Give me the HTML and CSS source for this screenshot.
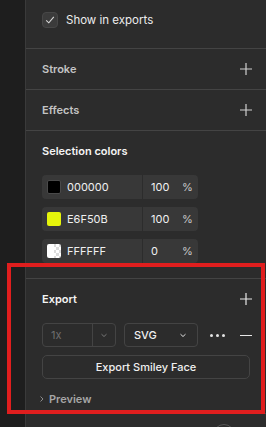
FILE: index.html
```html
<!DOCTYPE html>
<html>
<head>
<meta charset="utf-8">
<link rel="stylesheet" href="styles.css">
</head>
<body>
<div class="rail"></div>
<div class="panel">
  <div class="sec sec-top">
    <div class="check-row">
      <span class="checkbox">
        <svg width="12" height="12" viewBox="0 0 12 12"><path d="M2.2 6.3 L4.8 8.8 L9.8 2.8" fill="none" stroke="#d8d8d8" stroke-width="1.1"/></svg>
      </span>
      <span class="check-label">Show in exports</span>
    </div>
  </div>
  <div class="sec">
    <div class="head"><span class="title dim">Stroke</span><svg class="plus" width="12" height="12" viewBox="0 0 12 12"><path d="M6 0V12M0 6H12" stroke="#d0d0d0" stroke-width="1.2"/></svg></div>
  </div>
  <div class="sec">
    <div class="head"><span class="title dim">Effects</span><svg class="plus" width="12" height="12" viewBox="0 0 12 12"><path d="M6 0V12M0 6H12" stroke="#d0d0d0" stroke-width="1.2"/></svg></div>
  </div>
  <div class="sec sec-colors">
    <div class="head"><span class="title">Selection colors</span></div>
    <div class="crows">
      <div class="crow"><div class="cleft"><span class="sw sw-black"></span><span>000000</span></div><div class="cright"><span class="pct">100</span><span class="pc">%</span></div></div>
      <div class="crow"><div class="cleft"><span class="sw sw-yellow"></span><span>E6F50B</span></div><div class="cright"><span class="pct">100</span><span class="pc">%</span></div></div>
      <div class="crow"><div class="cleft"><span class="sw sw-white"></span><span>FFFFFF</span></div><div class="cright"><span class="pct">0</span><span class="pc">%</span></div></div>
    </div>
  </div>
  <div class="sec sec-export">
    <div class="head"><span class="title">Export</span><svg class="plus" width="12" height="12" viewBox="0 0 12 12"><path d="M6 0V12M0 6H12" stroke="#e8e8e8" stroke-width="1.2"/></svg></div>
    <div class="erow">
      <div class="dd dd-scale"><span class="dd-val">1x</span><span class="dd-arrow"><svg width="8" height="5" viewBox="0 0 8 5"><path d="M1.5 1.2 L4 3.5 L6.5 1.2" fill="none" stroke="#777" stroke-width="1"/></svg></span></div>
      <div class="dd dd-fmt"><span>SVG</span><svg width="8" height="5" viewBox="0 0 8 5"><path d="M1.5 1.2 L4 3.5 L6.5 1.2" fill="none" stroke="#e0e0e0" stroke-width="1"/></svg></div>
      <span class="dots"><i></i><i></i><i></i></span>
      <span class="minus"></span>
    </div>
    <div class="btn">Export Smiley Face</div>
    <div class="preview"><svg width="6" height="8" viewBox="0 0 6 8"><path d="M1.5 1.5 L4 4 L1.5 6.5" fill="none" stroke="#8a8a8a" stroke-width="1"/></svg><span>Preview</span></div>
  </div>
  <div class="sec-bottom"><span class="ring"></span></div>
</div>
<div class="highlight"></div>
</body>
</html>
```
FILE: styles.css
```css
html, body {
  margin: 0;
  padding: 0;
  height: 100%;
  overflow: hidden;
}
body {
  background: #1e1e1e;
  display: flex;
  font-family: Inter, "Noto Sans", sans-serif;
  font-size: 11px;
  color: #e8e8e8;
  position: relative;
}
.rail {
  width: 25px;
  flex: none;
  background: #1e1e1e;
}
.panel {
  flex: 1;
  background: #2c2c2c;
  border-left: 1px solid #3a3a3a;
  display: flex;
  flex-direction: column;
  overflow: hidden;
}
.panel > * {
  flex: none;
}
.sec {
  border-bottom: 1px solid #444444;
}
.sec-top {
  height: 49px;
  box-sizing: border-box;
  padding: 12px 16px 0 16px;
}
.check-row {
  display: flex;
  align-items: center;
  gap: 8px;
}
.checkbox {
  width: 16px;
  height: 16px;
  box-sizing: border-box;
  border-radius: 4px;
  background: #3b3b3b;
  border: 1px solid #474747;
  display: flex;
  align-items: center;
  justify-content: center;
}
.check-label {
  color: #ececec;
  font-size: 11.5px;
}
.head {
  height: 40px;
  display: flex;
  align-items: center;
  justify-content: space-between;
  padding: 0 14px 0 16px;
}
.title {
  font-weight: 600;
  font-size: 11px;
  color: #f4f4f4;
}
.title.dim {
  color: #c4c4c4;
}
.plus {
  display: block;
}
.sec-colors {
  padding-bottom: 15px;
}
.crows {
  display: flex;
  flex-direction: column;
  gap: 8px;
  padding: 4px 16px 0 16px;
}
.crow {
  width: 156px;
  height: 24px;
  background: #383838;
  border-radius: 4px;
  display: flex;
  align-items: center;
}
.cleft {
  width: 101px;
  height: 24px;
  box-sizing: border-box;
  padding-left: 5px;
  display: flex;
  align-items: center;
  gap: 6px;
  border-right: 1px solid #2c2c2c;
  color: #f0f0f0;
}
.cright {
  flex: 1;
  display: flex;
  align-items: center;
  padding-left: 8px;
  color: #f0f0f0;
}
.pct {
  width: 31px;
}
.pc {
  color: #c8c8c8;
}
.sw {
  width: 14px;
  height: 14px;
  box-sizing: border-box;
  border-radius: 2px;
  flex: none;
}
.sw-black {
  background: #000;
  border: 1px solid #4a4a4a;
}
.sw-yellow {
  background: #e6f50b;
}
.sw-white {
  background:
    linear-gradient(90deg, #ffffff 50%, transparent 50%),
    conic-gradient(#ffffff 25%, #dcdcdc 0 50%, #ffffff 0 75%, #dcdcdc 0);
  background-size: 100% 100%, 6px 6px;
}
.sec-export {
  padding-bottom: 2px;
}
.erow {
  display: flex;
  align-items: center;
  padding: 4px 14px 0 16px;
  height: 24px;
}
.dd {
  width: 74px;
  height: 24px;
  box-sizing: border-box;
  border: 1px solid #444444;
  border-radius: 4px;
  display: flex;
  align-items: center;
}
.dd-scale {
  margin-right: 8px;
}
.dd-val {
  width: 50px;
  box-sizing: border-box;
  padding-left: 8px;
  color: #6e6e6e;
  height: 22px;
  line-height: 22px;
  border-right: 1px solid #444444;
}
.dd-arrow {
  flex: 1;
  display: flex;
  justify-content: center;
}
.dd-fmt {
  justify-content: space-between;
  padding: 0 10px 0 9px;
  color: #f0f0f0;
  font-weight: 500;
}
.dots {
  display: flex;
  gap: 3px;
  margin-left: 12px;
}
.dots i {
  width: 3px;
  height: 3px;
  border-radius: 50%;
  background: #e4e4e4;
}
.minus {
  width: 12px;
  height: 1px;
  background: #e8e8e8;
  margin-left: auto;
}
.btn {
  margin: 8px 16px 0 16px;
  width: 208px;
  height: 24px;
  box-sizing: border-box;
  border: 1px solid #444444;
  border-radius: 5px;
  display: flex;
  align-items: center;
  justify-content: center;
  font-weight: 500;
  color: #f0f0f0;
}
.preview {
  height: 24px;
  margin-top: 8px;
  display: flex;
  align-items: center;
  gap: 4px;
  padding-left: 13px;
  color: #a6a6a6;
  font-weight: 600;
}
.sec-bottom {
  position: relative;
  height: 14px;
}
.ring {
  position: absolute;
  left: 187px;
  top: 10px;
  width: 20px;
  height: 20px;
  border-radius: 50%;
  border: 1px solid #555;
}
.highlight {
  position: absolute;
  left: 7px;
  top: 263px;
  width: 258px;
  height: 151px;
  box-sizing: border-box;
  border: 4px solid #e01e1e;
}
```
